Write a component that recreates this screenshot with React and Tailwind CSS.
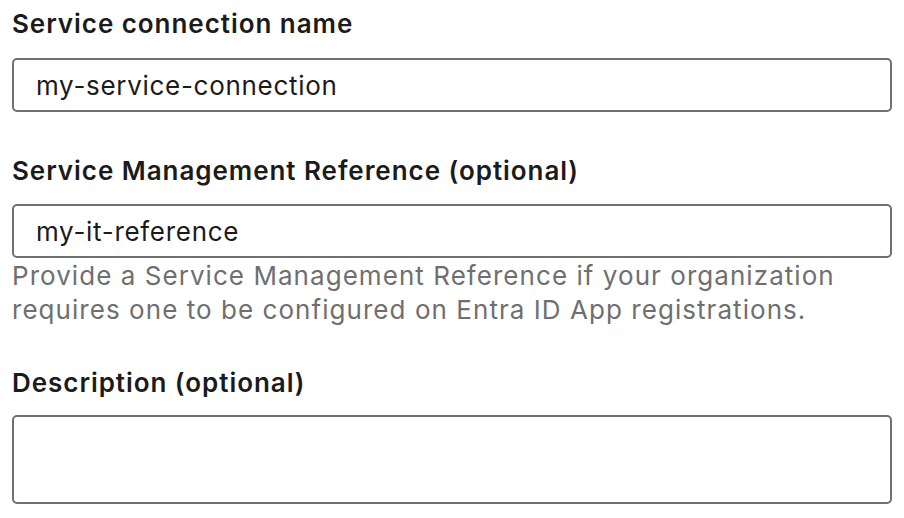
export default function App() {
  return (
    <div className="min-h-screen bg-white pl-[12px] pr-[12px] pt-[7px] font-['Inter','Noto_Sans',sans-serif] text-[#1b1b1b] tracking-[0.8px]">
      <div className="w-[880px]">
        <label className="block text-[26px] leading-[34px] font-semibold tracking-[0.95px]">Service connection name</label>
        <div className="mt-[17px] h-[54px] rounded-[5px] border-2 border-[#707070] px-[22px] flex items-center text-[26px] tracking-[0.7px]">
          my-service-connection
        </div>

        <label className="mt-[42px] block text-[26px] leading-[34px] font-semibold tracking-[0.95px]">
          Service Management Reference (optional)
        </label>
        <div className="mt-[16px] h-[54px] rounded-[5px] border-2 border-[#707070] px-[22px] flex items-center text-[26px] tracking-[0.7px]">
          my-it-reference
        </div>
        <p className="mt-[1px] text-[26px] leading-[34px] text-[#6f6f6f] tracking-[1.05px]">
          Provide a Service Management Reference if your organization
          <br />
          requires one to be configured on Entra ID App registrations.
        </p>

        <label className="mt-[39px] block text-[26px] leading-[34px] font-semibold tracking-[0.95px]">Description (optional)</label>
        <div className="mt-[15px] h-[89px] rounded-[5px] border-2 border-[#707070]" />
      </div>
    </div>
  )
}
